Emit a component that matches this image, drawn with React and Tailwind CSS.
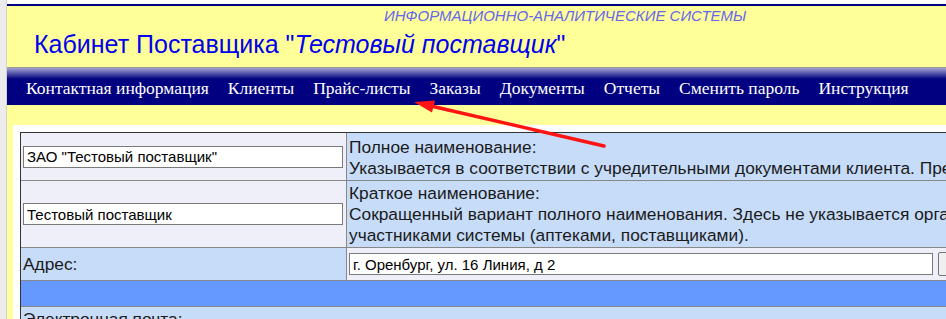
import React from "react";

const navItems = [
  "Контактная информация",
  "Клиенты",
  "Прайс-листы",
  "Заказы",
  "Документы",
  "Отчеты",
  "Сменить пароль",
  "Инструкция",
];

function Field({ value, width }) {
  return (
    <input
      readOnly
      value={value}
      className={`${width} h-[22px] border border-[#7a7a7a] bg-white px-[3px] text-[15px] text-black outline-none`}
    />
  );
}

export default function App() {
  return (
    <div className="relative flex h-[319px] w-[946px] overflow-hidden bg-white font-['Liberation_Sans',Arial,sans-serif] text-[#1a1a1a]">
      {/* left window strip */}
      <div className="w-[7px] shrink-0 border-r border-[#d2d2d2] bg-[#ececec]" />

      <div className="min-w-0 flex-1 pt-[4px]">
        <div className="border-t-2 border-[#000080] bg-[#ffff99]">
          {/* header */}
          <div className="h-[62px] border-b border-[#9a9a9a]">
            <div className="pl-[377px] pt-[1px] text-[15px] italic leading-[17px] text-[#6666ee] whitespace-nowrap">
              ИНФОРМАЦИОННО-АНАЛИТИЧЕСКИЕ СИСТЕМЫ
            </div>
            <div className="mt-[6px] pl-[27px] text-[25px] leading-[29px] text-[#0000ee] whitespace-nowrap">
              Кабинет Поставщика "<i>Тестовый поставщик</i>"
            </div>
          </div>

          {/* menu */}
          <div className="flex h-[37px] gap-[19px] bg-[linear-gradient(to_bottom,#a4a4d2_0px,#000080_11px,#000080_100%)] pl-[19px] pt-[10px] font-['Liberation_Serif','Times_New_Roman',serif] text-[17.5px] leading-[20px] text-white whitespace-nowrap">
            {navItems.map((item) => (
              <span key={item}>{item}</span>
            ))}
          </div>

          <div className="h-[20px]" />

          {/* content panel */}
          <div className="ml-[6px] bg-white pl-[7px] pt-[7px] text-[17.33px] leading-[21px]">
            <div className="w-[1400px] border-l border-t border-[#333]">
              <div className="flex h-[48px] border-b border-[#888]">
                <div className="flex w-[326px] shrink-0 items-center border-r border-[#888] bg-[#efeffa] pl-[2px]">
                  <Field value={'ЗАО "Тестовый поставщик"'} width="w-[320px]" />
                </div>
                <div className="flex flex-1 flex-col bg-[#c7dcf9] px-[2px] pt-[4px] whitespace-nowrap">
                  <span>Полное наименование:</span>
                  <span>
                    Указывается в соответствии с учредительными документами клиента. Предварительно проверьте правильность написания.
                  </span>
                </div>
              </div>

              <div className="flex h-[67px] border-b border-[#888]">
                <div className="flex w-[326px] shrink-0 items-center border-r border-[#888] bg-[#efeffa] pl-[2px]">
                  <Field value="Тестовый поставщик" width="w-[320px]" />
                </div>
                <div className="flex flex-1 flex-col justify-center bg-[#c7dcf9] px-[2px] whitespace-nowrap">
                  <span>Краткое наименование:</span>
                  <span>
                    Сокращенный вариант полного наименования. Здесь не указывается организационно-правовая форма, отображается другим
                  </span>
                  <span>участниками системы (аптеками, поставщиками).</span>
                </div>
              </div>

              <div className="flex h-[33px] border-b border-[#888]">
                <div className="flex w-[326px] shrink-0 items-center border-r border-[#888] bg-[#c7dcf9] pl-[2px]">
                  Адрес:
                </div>
                <div className="flex flex-1 items-center gap-[5px] bg-[#efeffa] pl-[2px]">
                  <Field value="г. Оренбург, ул. 16 Линия, д 2" width="w-[584px]" />
                  <button className="h-[24px] w-[60px] rounded-[2px] border border-[#767676] bg-[#efefef] text-[13px]">
                    ...
                  </button>
                </div>
              </div>

              <div className="h-[26px] border-b border-[#888] bg-[#6699ff]" />

              <div className="h-[30px] bg-[#c7dcf9] px-[2px] pt-[2px]">Электронная почта:</div>
            </div>
          </div>
        </div>
      </div>

      {/* red annotation arrow */}
      <svg className="pointer-events-none absolute left-0 top-0" width="946" height="319">
        <line x1="604" y1="146" x2="431" y2="106" stroke="#ff1414" strokeWidth="3.5" strokeLinecap="round" />
        <polygon points="414,102 435,100.5 432,112.5" fill="#ff1414" />
      </svg>
    </div>
  );
}
